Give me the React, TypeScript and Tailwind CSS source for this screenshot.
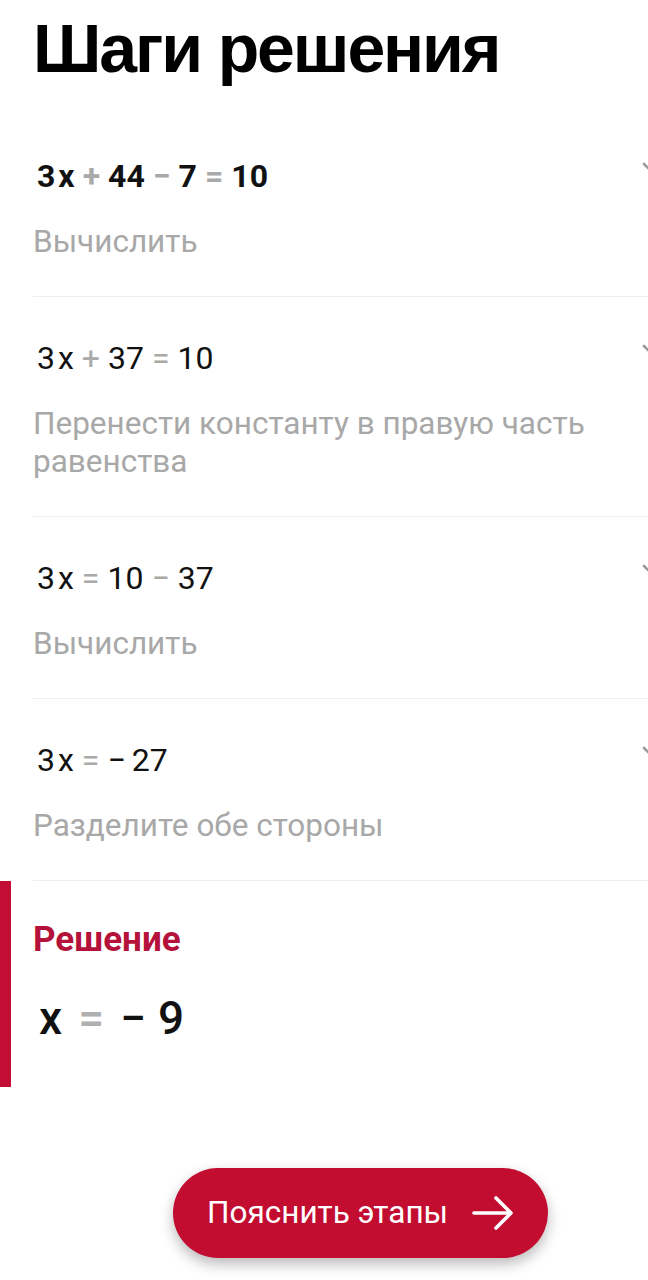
type Tok = { t: string; op?: boolean; gap?: boolean };

const STEPS: { eq: Tok[]; bold?: boolean; desc: string }[] = [
  {
    bold: true,
    eq: [{ t: "3" }, { t: "x", gap: true }, { t: "+", op: true }, { t: "44" }, { t: "−", op: true }, { t: "7" }, { t: "=", op: true }, { t: "10" }],
    desc: "Вычислить",
  },
  {
    eq: [{ t: "3" }, { t: "x", gap: true }, { t: "+", op: true }, { t: "37" }, { t: "=", op: true }, { t: "10" }],
    desc: "Перенести константу в правую часть равенства",
  },
  {
    eq: [{ t: "3" }, { t: "x", gap: true }, { t: "=", op: true }, { t: "10" }, { t: "−", op: true }, { t: "37" }],
    desc: "Вычислить",
  },
  {
    eq: [{ t: "3" }, { t: "x", gap: true }, { t: "=", op: true }, { t: "−" }, { t: "27" }],
    desc: "Разделите обе стороны",
  },
];

function Equation({ toks, bold }: { toks: Tok[]; bold?: boolean }) {
  return (
    <div className={`flex items-center h-[40px] pl-[4px] text-[32px] leading-[40px] text-[#111] ${bold ? "font-bold" : "font-normal"}`}>
      {toks.map((k, i) => (
        <span
          key={i}
          className={
            k.op ? "text-[#a9a9a9] mx-[8px]" : k.gap ? "ml-[3px]" : i > 0 && !toks[i - 1].gap && !toks[i - 1].op ? "ml-[6px]" : ""
          }
        >
          {k.t}
        </span>
      ))}
    </div>
  );
}

function Chevron() {
  return (
    <svg width="28" height="16" viewBox="0 0 28 16" fill="none" className="shrink-0 -mr-[22px] mt-[6px]">
      <path d="M2 2l12 12L26 2" stroke="#9a9a9a" strokeWidth="2.6" strokeLinecap="round" strokeLinejoin="round" />
    </svg>
  );
}

export default function App() {
  return (
    <div className="w-[648px] min-h-[1280px] bg-white overflow-hidden font-['Roboto',sans-serif]">
      {/* Title */}
      <h1 className="pt-[14px] mb-[33px] pl-[33px] text-[68px] leading-none font-bold text-black font-['Liberation_Sans',Arial,sans-serif] tracking-[-2.1px]">
        Шаги решения
      </h1>

      {/* Steps */}
      <div className="ml-[33px]">
        {STEPS.map((s, i) => (
          <div key={i} className="border-b border-[#eeeeee] pt-[41px] pb-[35px]">
            <div className="flex items-start justify-between">
              <Equation toks={s.eq} bold={s.bold} />
              <Chevron />
            </div>
            <p className="mt-[27px] pr-[30px] text-[31.5px] leading-[38px] text-[#a8a8a8]">{s.desc}</p>
          </div>
        ))}
      </div>

      {/* Solution */}
      <div className="flex">
        <div className="w-[11px] bg-[#c20e32]" />
        <div className="pl-[22px] pt-[39px] pb-[41px]">
          <p className="text-[35px] leading-[40px] font-bold text-[#b5123b]">Решение</p>
          <div className="mt-[30px] flex items-center h-[56px] pl-[6px] text-[46px] leading-[56px] font-medium text-[#111]">
            <span>x</span>
            <span className="mx-[16px] text-[#b0b0b0]">=</span>
            <span>−</span>
            <span className="ml-[12px]">9</span>
          </div>
        </div>
      </div>

      {/* Button */}
      <div className="mt-[81px] ml-[173px] pb-[22px]">
        <button className="flex items-center justify-between w-[375px] h-[90px] rounded-full bg-[#c20d31] pl-[34px] pr-[34px] text-white text-[31.5px] leading-none shadow-[0_6px_14px_rgba(0,0,0,0.28)]">
          <span>Пояснить этапы</span>
          <svg width="42" height="34" viewBox="0 0 42 34" fill="none">
            <path d="M2 17h37M24 2l15 15-15 15" stroke="white" strokeWidth="3.6" strokeLinecap="round" strokeLinejoin="round" />
          </svg>
        </button>
      </div>
    </div>
  );
}
